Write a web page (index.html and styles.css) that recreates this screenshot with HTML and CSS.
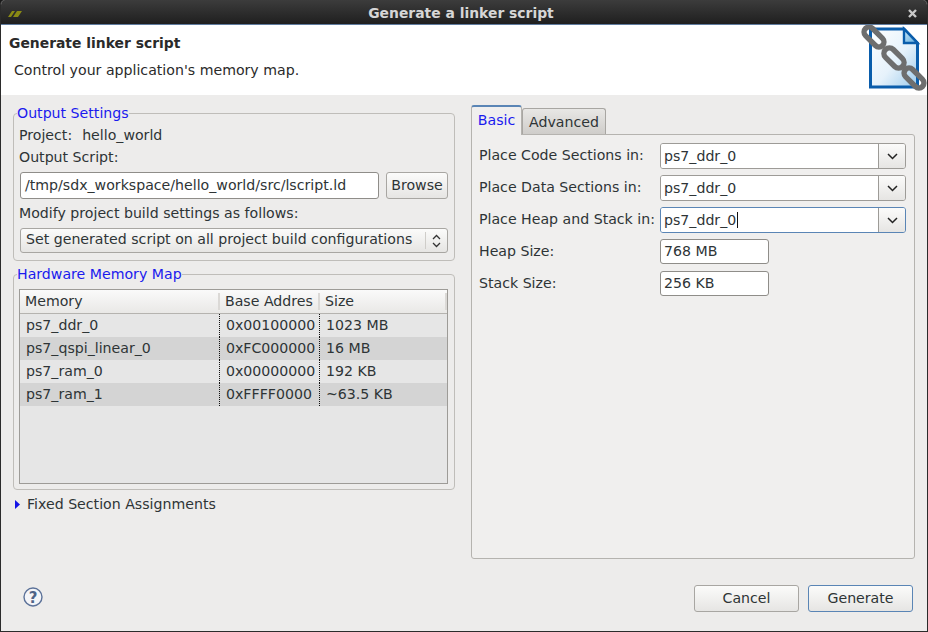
FILE: index.html
```html
<!DOCTYPE html>
<html lang="en">
<head>
    <meta charset="UTF-8">
    <title>Generate a linker script</title>
    <link rel="stylesheet" href="styles.css">
</head>
<body>
<div class="window">
    <div class="titlebar">
        <svg class="app-icon" width="14" height="6" viewBox="0 0 14 6">
            <path d="M0 6 L4 0 H7 L3 6 Z M5 6 L9 0 H14 L10 6 Z" fill="#8a8a14"/>
        </svg>
        <span class="title">Generate a linker script</span>
        <svg class="close-icon" width="9" height="9" viewBox="0 0 9 9">
            <path d="M1 1 L8 8 M8 1 L1 8" stroke="#c8c8c8" stroke-width="2.4"/>
        </svg>
    </div>

    <div class="banner">
        <h1>Generate linker script</h1>
        <p>Control your application's memory map.</p>
        <svg class="banner-icon" width="67" height="66" viewBox="0 0 67 66">
            <defs>
                <linearGradient id="page" x1="0" y1="0" x2="1" y2="1">
                    <stop offset="0" stop-color="#ffffff"/>
                    <stop offset="0.55" stop-color="#e6f2fb"/>
                    <stop offset="1" stop-color="#9dcbec"/>
                </linearGradient>
                <linearGradient id="fold" x1="0" y1="0" x2="1" y2="1">
                    <stop offset="0" stop-color="#d2ebf9"/>
                    <stop offset="1" stop-color="#5aa9dc"/>
                </linearGradient>
            </defs>
            <path d="M9.5 4 H43 L56.5 18 V62 H9.5 Z" fill="url(#page)" stroke="#0a5dab" stroke-width="3"/>
            <path d="M43 4 V18 H56.5 Z" fill="url(#fold)" stroke="#0a5dab" stroke-width="2.4"/>
            <g fill="none" stroke="#6e6e6e" stroke-width="5.4">
                <rect x="-12" y="-5" width="24" height="10" rx="5" transform="translate(13 12) rotate(45)"/>
                <rect x="-12" y="-5.5" width="24" height="11" rx="5.5" transform="translate(33 33) rotate(45)"/>
                <rect x="-12" y="-5" width="24" height="10" rx="5" transform="translate(53 53) rotate(45)"/>
            </g>
        </svg>
    </div>

    <div class="content">
        <div class="left-col">
            <fieldset class="group output-group">
                <legend>Output Settings</legend>
                <div class="project-row"><span>Project:</span><span>hello_world</span></div>
                <div class="field-label">Output Script:</div>
                <div class="script-row">
                    <div class="text-input script-input">/tmp/sdx_workspace/hello_world/src/lscript.ld</div>
                    <button class="btn browse-btn" type="button">Browse</button>
                </div>
                <div class="field-label">Modify project build settings as follows:</div>
                <div class="select-box">
                    <span class="select-text">Set generated script on all project build configurations</span>
                    <span class="select-arrows">
                        <svg width="9" height="14" viewBox="0 0 9 14">
                            <path d="M1 5 L4.5 1.5 L8 5 M1 9 L4.5 12.5 L8 9" fill="none" stroke="#333" stroke-width="1.3"/>
                        </svg>
                    </span>
                </div>
            </fieldset>

            <fieldset class="group memory-group">
                <legend>Hardware Memory Map</legend>
                <div class="table">
                    <div class="thead">
                        <div class="th col-mem">Memory</div>
                        <div class="th col-base">Base Addres</div>
                        <div class="th col-size">Size</div>
                    </div>
                    <div class="tr">
                        <div class="td col-mem">ps7_ddr_0</div>
                        <div class="td col-base">0x00100000</div>
                        <div class="td col-size">1023 MB</div>
                    </div>
                    <div class="tr alt">
                        <div class="td col-mem">ps7_qspi_linear_0</div>
                        <div class="td col-base">0xFC000000</div>
                        <div class="td col-size">16 MB</div>
                    </div>
                    <div class="tr">
                        <div class="td col-mem">ps7_ram_0</div>
                        <div class="td col-base">0x00000000</div>
                        <div class="td col-size">192 KB</div>
                    </div>
                    <div class="tr alt">
                        <div class="td col-mem">ps7_ram_1</div>
                        <div class="td col-base">0xFFFF0000</div>
                        <div class="td col-size">~63.5 KB</div>
                    </div>
                </div>
            </fieldset>

            <div class="expander">
                <svg width="5" height="9" viewBox="0 0 5 9"><path d="M0 0 L5 4.5 L0 9 Z" fill="#1414e6"/></svg>
                <span>Fixed Section Assignments</span>
            </div>
        </div>

        <div class="right-col">
            <div class="tabs">
                <div class="tab active">Basic</div>
                <div class="tab">Advanced</div>
            </div>
            <div class="tab-panel">
                <div class="form-row">
                    <label>Place Code Sections in:</label>
                    <div class="combo">
                        <div class="combo-text">ps7_ddr_0</div>
                        <div class="combo-btn">
                            <svg width="11" height="7" viewBox="0 0 11 7"><path d="M1 1 L5.5 5.5 L10 1" fill="none" stroke="#222" stroke-width="1.5"/></svg>
                        </div>
                    </div>
                </div>
                <div class="form-row">
                    <label>Place Data Sections in:</label>
                    <div class="combo">
                        <div class="combo-text">ps7_ddr_0</div>
                        <div class="combo-btn">
                            <svg width="11" height="7" viewBox="0 0 11 7"><path d="M1 1 L5.5 5.5 L10 1" fill="none" stroke="#222" stroke-width="1.5"/></svg>
                        </div>
                    </div>
                </div>
                <div class="form-row">
                    <label>Place Heap and Stack in:</label>
                    <div class="combo focused">
                        <div class="combo-text"><span class="caret">ps7_ddr_0</span></div>
                        <div class="combo-btn">
                            <svg width="11" height="7" viewBox="0 0 11 7"><path d="M1 1 L5.5 5.5 L10 1" fill="none" stroke="#222" stroke-width="1.5"/></svg>
                        </div>
                    </div>
                </div>
                <div class="form-row">
                    <label>Heap Size:</label>
                    <div class="text-input size-input">768 MB</div>
                </div>
                <div class="form-row">
                    <label>Stack Size:</label>
                    <div class="text-input size-input">256 KB</div>
                </div>
            </div>
        </div>
    </div>

    <div class="footer">
        <svg class="help-icon" width="20" height="20" viewBox="0 0 20 20">
            <circle cx="10" cy="10" r="9" fill="#f4f5f8" stroke="#5c7299" stroke-width="1.4"/>
            <text x="10" y="15.5" text-anchor="middle" class="help-mark">?</text>
        </svg>
        <div class="footer-buttons">
            <button class="btn footer-btn" type="button">Cancel</button>
            <button class="btn footer-btn default" type="button">Generate</button>
        </div>
    </div>
</div>
</body>
</html>
```

FILE: styles.css
```css
html, body {
    margin: 0;
    padding: 0;
    background-color: #1a1a1a;
}

.window {
    position: relative;
    width: 928px;
    height: 632px;
    box-sizing: border-box;
    display: flex;
    flex-direction: column;
    overflow: hidden;
    background-color: #edeceb;
    border: solid #2b2b2b;
    border-width: 0 1px 1px 1px;
    border-radius: 5px 5px 0 0;
    font-family: "DejaVu Sans", sans-serif;
    font-size: 14.15px;
    color: #2e3436;
}

/* Title bar */
.titlebar {
    position: relative;
    flex: none;
    height: 25px;
    box-sizing: border-box;
    display: flex;
    align-items: center;
    justify-content: center;
    margin: 0 -1px;
    padding: 1px 6px 0 0;
    background: linear-gradient(#3c3c3c, #1f1f1f);
    border-bottom: 1px solid #5f7b9e;
}

.title {
    color: #d6d6d6;
    font-weight: bold;
    font-size: 13.9px;
}

.app-icon {
    position: absolute;
    left: 8px;
    top: 11px;
}

.close-icon {
    position: absolute;
    right: 11px;
    top: 9px;
}

/* White banner */
.banner {
    position: relative;
    flex: none;
    height: 70px;
    background-color: #fff;
    box-sizing: border-box;
    padding: 10px 0 0 8px;
    color: #2a2a2a;
}

.banner h1 {
    margin: 0;
    font-size: 13.9px;
    line-height: 16px;
    font-weight: bold;
}

.banner p {
    margin: 11px 0 0 5px;
    line-height: 16px;
}

.banner-icon {
    position: absolute;
    left: 860px;
    top: 0;
}

/* Main area */
.content {
    flex: 1;
    display: flex;
    gap: 16px;
    padding: 10px 12px 0 12px;
    min-height: 0;
}

.left-col {
    width: 442px;
    flex: none;
}

.group {
    margin: 0;
    padding: 0 6px 0 5px;
    border: 1px solid #bfbdb9;
    border-radius: 4px;
    min-width: 0;
    box-sizing: border-box;
}

.group legend {
    padding: 0;
    margin: 0 0 4px -2px;
    line-height: 16px;
    color: #1a1aee;
}

.output-group {
    height: 156px;
}

.project-row {
    display: flex;
    gap: 10px;
    line-height: 16px;
    margin-top: 2px;
}

.field-label {
    line-height: 16px;
    margin-top: 6px;
}

.script-row {
    display: flex;
    justify-content: space-between;
    margin: 7px 0 0 1px;
}

.text-input {
    box-sizing: border-box;
    background-color: #fff;
    border: 1px solid #8f8d89;
    border-radius: 3px;
    padding-left: 4px;
    height: 27px;
    line-height: 25px;
    white-space: nowrap;
}

.script-input {
    width: 359px;
}

.btn {
    font-family: inherit;
    font-size: 14.15px;
    color: #2e3436;
    border: 1px solid #a8a6a2;
    border-radius: 3px;
    background: linear-gradient(#fbfbfa, #e6e5e3);
    padding: 0 0 2px 0;
}

.browse-btn {
    width: 62px;
    height: 27px;
}

.select-box {
    display: flex;
    justify-content: space-between;
    align-items: center;
    box-sizing: border-box;
    height: 25px;
    margin: 7px 0 0 1px;
    padding-left: 5px;
    border: 1px solid #a8a6a2;
    border-radius: 3px;
    background: linear-gradient(#fbfbfa, #e6e5e3);
    white-space: nowrap;
}

.select-text {
    line-height: 21px;
    margin-bottom: 2px;
}

.select-arrows {
    display: flex;
    align-items: center;
    justify-content: center;
    width: 21px;
    height: 17px;
    border-left: 1px solid #cfcdc9;
}

.memory-group {
    margin-top: 5px;
    height: 224px;
}

/* Memory table */
.table {
    margin-top: 3px;
    height: 195px;
    box-sizing: border-box;
    border: 1px solid #9d9b97;
    background-color: #e6e6e6;
}

.thead {
    display: flex;
    height: 24px;
    box-sizing: border-box;
    background: linear-gradient(#fafafa, #e9e8e6);
    border-bottom: 1px solid #b5b3af;
    align-items: center;
}

.th {
    box-sizing: border-box;
    height: 17px;
    line-height: 17px;
    padding-left: 5px;
    border-right: 2px solid #dbd9d6;
    white-space: nowrap;
    overflow: hidden;
}

.th.col-mem {
    width: 200px;
}

.tr {
    display: flex;
    height: 23px;
}

.tr.alt {
    background-color: #d4d4d4;
}

.td {
    box-sizing: border-box;
    line-height: 23px;
    padding-left: 6px;
}

.col-mem {
    width: 199px;
    flex: none;
}

.col-base {
    width: 100px;
    flex: none;
    white-space: nowrap;
}

.col-size {
    flex: 1;
}

.td.col-base,
.td.col-size {
    border-left: 1px dotted #111;
}

.expander {
    display: flex;
    align-items: center;
    gap: 7px;
    margin: 6px 0 0 2px;
    line-height: 16px;
}

/* Tabs on the right */
.right-col {
    flex: none;
    width: 444px;
    display: flex;
    flex-direction: column;
    height: 454px;
}

.tabs {
    flex: none;
    display: flex;
    align-items: flex-end;
    height: 29px;
}

.tab {
    box-sizing: border-box;
    height: 26px;
    line-height: 27px;
    width: 84px;
    text-align: center;
    background: linear-gradient(#e8e7e5, #cfcdca);
    border: 1px solid #a8a6a2;
    border-bottom: none;
    border-radius: 3px 3px 0 0;
}

.tab.active {
    position: relative;
    height: 30px;
    width: 51px;
    margin-bottom: -1px;
    line-height: 27px;
    color: #1a1aee;
    background: #f0efee;
    border-color: #b5b3af;
    border-top: 2px solid #5a85b5;
}

.tab-panel {
    flex: 1;
    box-sizing: border-box;
    padding: 8px 8px 0 7px;
    background-color: #f0efee;
    border: 1px solid #b5b3af;
    border-radius: 0 3px 3px 3px;
}

.form-row {
    display: flex;
    align-items: flex-start;
    height: 26px;
    margin-bottom: 6px;
}

.form-row label {
    width: 181px;
    flex: none;
    line-height: 24px;
    white-space: nowrap;
}

.combo {
    display: flex;
    width: 246px;
    height: 26px;
    box-sizing: border-box;
    border: 1px solid #9d9b97;
    border-radius: 3px;
    overflow: hidden;
}

.combo.focused {
    border-color: #5a85b5;
}

.combo-text {
    flex: 1;
    background-color: #fff;
    padding-left: 3px;
    line-height: 24px;
}

.caret {
    border-right: 1px solid #111;
    padding-right: 1px;
}

.combo-btn {
    width: 26px;
    flex: none;
    display: flex;
    align-items: center;
    justify-content: center;
    background: linear-gradient(#fbfbfa, #e6e5e3);
    border-left: 1px solid #9d9b97;
}

.size-input {
    width: 109px;
    height: 25px;
    line-height: 23px;
    padding-left: 3px;
}

/* Bottom buttons */
.footer {
    flex: none;
    height: 72px;
    display: flex;
    align-items: flex-start;
    justify-content: space-between;
    padding: 26px 14px 0 22px;
    box-sizing: border-box;
}

.help-icon {
    margin-top: 2px;
}

.help-mark {
    font-family: "DejaVu Sans", sans-serif;
    font-size: 15px;
    font-weight: bold;
    fill: #4f6488;
}

.footer-buttons {
    display: flex;
    gap: 9px;
}

.footer-btn {
    width: 105px;
    height: 27px;
}

.footer-btn.default {
    border-color: #5a85b5;
}
```
